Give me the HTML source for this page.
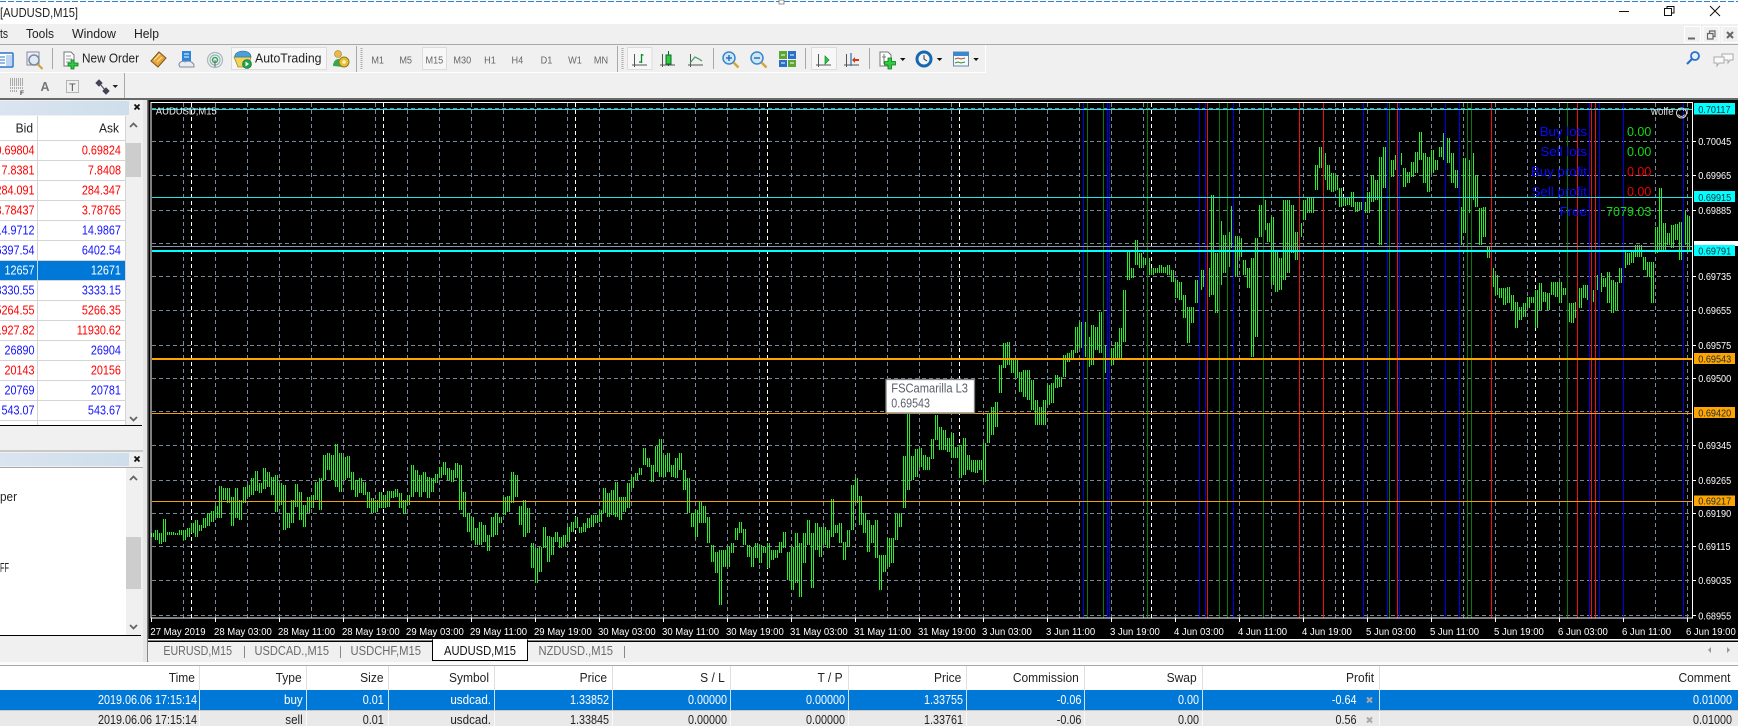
<!DOCTYPE html>
<html><head><meta charset="utf-8"><title>AUDUSD,M15</title>
<style>
html,body{margin:0;padding:0;background:#f0f0f0;width:1738px;height:726px;overflow:hidden}
svg{display:block;font-family:"Liberation Sans",sans-serif}
.c{shape-rendering:crispEdges}
</style></head><body>
<svg width="1738" height="726" viewBox="0 0 1738 726" xmlns="http://www.w3.org/2000/svg">
<defs>
<pattern id="b" width="2" height="1" patternUnits="userSpaceOnUse"><rect x="1" width="1" height="1" fill="#28f028"/></pattern>
<linearGradient id="hd" x1="0" x2="1" y1="0" y2="0"><stop offset="0" stop-color="#d9e5f0"/><stop offset="1" stop-color="#cfdeec"/></linearGradient>
</defs>
<!-- base -->
<rect width="1738" height="726" fill="#f0f0f0"/>
<rect width="1738" height="24" fill="#fff"/>
<path d="M0 1.5H1738" stroke="#2f80d0" stroke-width="1" stroke-dasharray="6 2" class="c"/>
<rect x="779" y="0" width="5" height="4" fill="#fff" stroke="#777" stroke-width=".8"/>
<text x="0" y="17" font-size="13" fill="#222" textLength="78" lengthAdjust="spacingAndGlyphs">[AUDUSD,M15]</text>
<!-- window controls -->
<path d="M1619 11.5H1629" stroke="#111" class="c"/>
<path d="M1664.5 8.5h7v7h-7zM1667 8V6.5h7V13h-2" fill="none" stroke="#111"/>
<path d="M1710 6l10 10M1720 6l-10 10" stroke="#111" stroke-width="1"/>
<!-- menu -->
<g font-size="13" fill="#222">
<text x="0" y="38" textLength="8" lengthAdjust="spacingAndGlyphs">ts</text>
<text x="26" y="38" textLength="28" lengthAdjust="spacingAndGlyphs">Tools</text>
<text x="72" y="38" textLength="44" lengthAdjust="spacingAndGlyphs">Window</text>
<text x="134" y="38" textLength="25" lengthAdjust="spacingAndGlyphs">Help</text>
</g>
<g fill="#f0f0f0" stroke="#fff" class="c"><rect x="1684.5" y="26.5" width="16" height="16"/><rect x="1703" y="26.5" width="16" height="16"/><rect x="1722" y="26.5" width="16" height="16"/></g>
<path d="M1688 38.5h7" stroke="#666" stroke-width="2"/>
<path d="M1707.500 33.500h5.500v5.500h-5.500zM1709.500 33v-2h5.500v5.500h-2" fill="none" stroke="#666" stroke-width="1.200"/>
<path d="M1727 32l6 6M1733 32l-6 6" stroke="#666" stroke-width="2"/>
<rect y="44" width="1738" height="1" fill="#a8a8a8"/>
<rect x="0" y="72" width="986" height="1" fill="#fff"/>
<rect x="985" y="45" width="1" height="27" fill="#fff"/>
<!-- toolbar 1 icons -->
<rect x="-4" y="53" width="17" height="14" rx="1" fill="#fff" stroke="#2a73c8" stroke-width="1.500"/><path d="M0 57h5M0 60h5M0 63h5" stroke="#2a73c8"/><rect x="6" y="55" width="6" height="11" fill="#bcd6f2"/>
<rect x="27" y="52" width="12" height="13" fill="#eef" stroke="#889"/><circle cx="34" cy="60" r="5" fill="#dfeaf4" stroke="#7a8a9a" stroke-width="1.500"/><path d="M37.500 64l5 5" stroke="#c9a13a" stroke-width="2"/>
<rect x="52" y="48" width="1" height="21" fill="#a8a8a8"/>
<path d="M64 52h7l3 3v11H64z" fill="#fff" stroke="#777"/><path d="M66 56h5M66 59h6M66 62h4" stroke="#99a"/>
<path d="M71 60v3h-3v3h3v3h3v-3h4v-3h-4v-3z" fill="#2ecc40" stroke="#0a7a1a" stroke-width=".8"/>
<text x="82" y="62.500" font-size="12.500" fill="#222" textLength="57" lengthAdjust="spacingAndGlyphs">New Order</text>
<path d="M151 61l8-9 7 6-8 9z" fill="#e8a63a" stroke="#7a5418" stroke-width="1"/><path d="M154 60l6-6M157 62l5-5" stroke="#ffe6a0"/>
<rect x="182" y="51" width="9" height="10" fill="#2f86d8"/><path d="M184 54h5M184 57h5" stroke="#dff"/><path d="M180 67c-3-4 2-7 5-5 3-2 10 0 9 5z" fill="#e6eef5" stroke="#889"/>
<g fill="none"><circle cx="215" cy="60" r="7.500" stroke="#a7b7c7" stroke-width="1.200"/><circle cx="215" cy="60" r="5" stroke="#8fbf9f" stroke-width="1.200"/><circle cx="215" cy="60" r="2.500" stroke="#3a9e6a" stroke-width="1.500"/></g><path d="M215 60v7" stroke="#667"/>
<rect x="231.500" y="47.500" width="95" height="22" fill="#f7f7f7" stroke="#dcdcdc" class="c"/>
<path d="M234 57h17l-3 10h-10z" fill="#f2d45c" stroke="#a08a2a" stroke-width=".8"/><path d="M235 57c-1-3 3-6 8-6 4 0 8 2 8 6z" fill="#4a9fd8" stroke="#2a6a98" stroke-width=".6"/><circle cx="247" cy="64" r="4.500" fill="#1fa04a" stroke="#0a6a2a" stroke-width=".6"/><path d="M245.500 61.500v5l3.500-2.500z" fill="#fff"/>
<text x="255" y="62.500" font-size="12.500" fill="#222" textLength="66.500" lengthAdjust="spacingAndGlyphs">AutoTrading</text>
<circle cx="338" cy="54" r="3.500" fill="#e9b949" stroke="#a07a20" stroke-width=".6"/><path d="M333 66c0-8 8-9 10-4v5z" fill="#37a84a"/><circle cx="344" cy="62" r="5" fill="#e5c13a" stroke="#8e7a20"/><circle cx="344" cy="62" r="1.800" fill="#fff3b0"/>
<rect x="356" y="46" width="1" height="26" fill="#a8a8a8"/><path d="M361.500 48V69" stroke="#aaa" stroke-width="2" stroke-dasharray="1 1"/>
<rect x="422.500" y="47.500" width="24" height="22" fill="#f7f7f7" stroke="#dcdcdc" class="c"/>
<g transform="scale(.87 1)" font-size="10.500" fill="#666" text-anchor="middle">
<text x="434.100" y="63.300">M1</text><text x="466.300" y="63.300">M5</text><text x="499.300" y="63.300">M15</text><text x="531.400" y="63.300">M30</text><text x="563.200" y="63.300">H1</text><text x="594.700" y="63.300">H4</text><text x="628.200" y="63.300">D1</text><text x="660.900" y="63.300">W1</text><text x="690.800" y="63.300">MN</text>
</g>
<rect x="617" y="46" width="1" height="26" fill="#a8a8a8"/><path d="M622.500 48V69" stroke="#aaa" stroke-width="2" stroke-dasharray="1 1"/>
<rect x="627.500" y="47.500" width="24.500" height="22" fill="#f7f7f7" stroke="#dcdcdc" class="c"/>
<rect x="811.500" y="47.500" width="25" height="22" fill="#f7f7f7" stroke="#dcdcdc" class="c"/>
<g fill="none" stroke="#555" class="c">
<path d="M634.500 54v13M632 65h15"/><path d="M662.500 54v13M660 65h15"/><path d="M690.500 54v13M688 65h15"/><path d="M818.500 54v13M816 65h15"/><path d="M846.500 54v13M844 65h15"/>
</g>
<path d="M641.500 54v9M639 62h2.500M641.500 55h2" fill="none" stroke="#0a8a2a" stroke-width="1.300"/>
<rect x="666" y="55" width="5" height="9" fill="#2ecc40" stroke="#0a6a2a"/><path d="M668.500 51v4M668.500 64v2" stroke="#0a6a2a"/>
<path d="M690 63l5-6 4 2 3 2" fill="none" stroke="#3aa05a" stroke-width="1.200"/>
<path d="M825 56v8l4-4z" fill="#2ecc40" stroke="#0a8a2a" stroke-width=".7"/>
<path d="M851 53v13" stroke="#2a70a8" stroke-width="1.200"/><path d="M859 59h-4v-2l-3 3 3 3v-2h4z" fill="#d03a1a"/>
<rect x="713" y="48" width="1" height="21" fill="#a8a8a8"/><rect x="805" y="48" width="1" height="21" fill="#a8a8a8"/><rect x="869" y="48" width="1" height="21" fill="#a8a8a8"/>
<g><circle cx="729" cy="58" r="6" fill="#cfe6f8" stroke="#3a88c8" stroke-width="1.500"/><path d="M726 58h6M729 55v6" stroke="#2a70b8" stroke-width="1.500"/><path d="M733.500 62.500l5 5" stroke="#d0a83a" stroke-width="2.500"/></g>
<g><circle cx="757" cy="58" r="6" fill="#cfe6f8" stroke="#3a88c8" stroke-width="1.500"/><path d="M754 58h6" stroke="#2a70b8" stroke-width="1.500"/><path d="M761.500 62.500l5 5" stroke="#d0a83a" stroke-width="2.500"/></g>
<g class="c"><rect x="779" y="51" width="8" height="8" fill="#5aa832"/><rect x="788" y="51" width="8" height="8" fill="#2a70c8"/><rect x="779" y="60" width="8" height="7" fill="#2a70c8"/><rect x="788" y="60" width="8" height="7" fill="#5aa832"/><path d="M781 55h4M790 55h4M781 63h4M790 63h4" stroke="#fff"/></g>
<path d="M880 52h8l3 3v11H880z" fill="#fff" stroke="#777"/><path d="M884 54v10M882 57h4" stroke="#777"/>
<path d="M888 58v3.500h-3.500v3.500h3.500v4h3.500v-4h4v-3.500h-4V58z" fill="#2ecc40" stroke="#0a7a1a" stroke-width=".8"/>
<path d="M900 58h5.500l-2.700 3zM936.800 58h5.500l-2.700 3zM973.300 58h5.500l-2.700 3z" fill="#111"/>
<circle cx="924" cy="59" r="7" fill="#f2f5f8" stroke="#1668b0" stroke-width="3"/><path d="M924 55v4l3 2" fill="none" stroke="#333"/>
<rect x="953.500" y="52" width="15" height="14" fill="#f4f8fb" stroke="#6688a8"/><rect x="953.500" y="52" width="15" height="4" fill="#3a88d0"/><path d="M955 59l3-1 3 1 4-1" fill="none" stroke="#b0502a"/><path d="M955 63l3-1 3 1 4-1" fill="none" stroke="#3a8a3a"/>
<!-- top right -->
<circle cx="1695" cy="56" r="4" fill="#e6f0fa" stroke="#2a70c8" stroke-width="1.800"/><path d="M1692 59l-5 5" stroke="#2a70c8" stroke-width="2.200"/>
<path d="M1722 54h11v6h-3l-2 3v-3h-6z" fill="#fafafa" stroke="#aaa"/><path d="M1714 57h10v6h-5l-2 3v-3h-3z" fill="#fafafa" stroke="#aaa"/>
<!-- toolbar 2 -->
<path d="M10 79h13M10 81h13M10 83h13M10 85h13M10 88h13M10 91h8" stroke="#666" stroke-dasharray="1 1"/>
<text x="20" y="95" font-size="6.500" font-weight="bold" fill="#444">F</text>
<text x="40.500" y="91" font-size="12.500" fill="#777" font-weight="bold">A</text>
<rect x="66.500" y="80.500" width="12" height="12" fill="none" stroke="#777" stroke-dasharray="1 1"/><text x="69" y="91" font-size="11" fill="#555">T</text>
<path d="M96 83l3-3 3 3-3 3zM103 91l3-3 3 3-3 3zM100 84l5 6" fill="#445" stroke="#445"/>
<path d="M112.500 85h5.500l-2.700 3z" fill="#222"/>
<rect x="124" y="73" width="1" height="25" fill="#a8a8a8"/>
<rect y="98" width="1738" height="2" fill="#696969"/>
<!-- left panel -->
<rect x="143" y="100" width="4" height="562" fill="#e6e6e6"/>
<rect x="0" y="100" width="143" height="16" fill="#f0f0f0"/>
<rect x="0" y="101" width="129" height="14" fill="url(#hd)"/>
<path d="M134.500 104.500l5 5M139.500 104.500l-5 5" stroke="#111" stroke-width="1.800"/>
<rect x="0" y="116" width="125.500" height="309" fill="#fff"/>
<rect x="126" y="116" width="17" height="309" fill="#f0f0f0"/>
<rect x="126" y="143" width="15" height="34" fill="#cdcdcd"/>
<path d="M130 127l3.500-3.500 3.500 3.500M130 417l3.500 3.500 3.500-3.500" fill="none" stroke="#666" stroke-width="1.800"/>
<rect x="0" y="260" width="125" height="20" fill="#0078d7"/>
<g class="c" stroke="#d4d4d4"><path d="M0 140.500H125M0 160.500H125M0 180.500H125M0 200.500H125M0 220.500H125M0 240.500H125M0 260.500H125M0 280.500H125M0 300.500H125M0 320.500H125M0 340.500H125M0 360.500H125M0 380.500H125M0 400.500H125M0 420.500H125M37.500 116V425M125.500 116V425"/></g>
<path d="M37.500 261V280" stroke="#bcd6f0" class="c"/>
<g transform="scale(.96 1)" font-size="12.500" fill="#222" text-anchor="end"><text x="34.400" y="132.700">Bid</text><text x="124" y="132.700">Ask</text></g>
<g transform="scale(.864 1)" font-size="12.500" text-anchor="end">
<g fill="#ff0000"><text x="39.900" y="154.500">0.69804</text><text x="140" y="154.500">0.69824</text><text x="39.900" y="174.500">7.8381</text><text x="140" y="174.500">7.8408</text><text x="39.900" y="194.500">284.091</text><text x="140" y="194.500">284.347</text><text x="39.900" y="214.500">3.78437</text><text x="140" y="214.500">3.78765</text></g>
<g fill="#1414ff"><text x="39.900" y="234.500">14.9712</text><text x="140" y="234.500">14.9867</text><text x="39.900" y="254.500">6397.54</text><text x="140" y="254.500">6402.54</text></g>
<g fill="#fff"><text x="39.900" y="274.500">12657</text><text x="140" y="274.500">12671</text></g>
<g fill="#1414ff"><text x="39.900" y="294.500">3330.55</text><text x="140" y="294.500">3333.15</text></g>
<g fill="#ff0000"><text x="39.900" y="314.500">5264.55</text><text x="140" y="314.500">5266.35</text><text x="39.900" y="334.500">11927.82</text><text x="140" y="334.500">11930.62</text></g>
<g fill="#1414ff"><text x="39.900" y="354.500">26890</text><text x="140" y="354.500">26904</text></g>
<g fill="#ff0000"><text x="39.900" y="374.500">20143</text><text x="140" y="374.500">20156</text></g>
<g fill="#1414ff"><text x="39.900" y="394.500">20769</text><text x="140" y="394.500">20781</text><text x="39.900" y="414.500">543.07</text><text x="140" y="414.500">543.67</text></g>
</g>
<rect x="0" y="425" width="142" height="1" fill="#000"/>
<rect x="0" y="450" width="143" height="2" fill="#c8c8c8"/>
<rect x="0" y="453" width="129" height="13" fill="url(#hd)"/>
<path d="M134.500 456.500l5 5M139.500 456.500l-5 5" stroke="#111" stroke-width="1.800"/>
<rect x="0" y="467" width="143" height="1" fill="#a8a8a8"/>
<rect x="0" y="468" width="126" height="167.500" fill="#fff"/>
<rect x="126" y="537" width="15" height="52" fill="#cdcdcd"/>
<path d="M130 480l3.500-3.500 3.500 3.500M130 625l3.500 3.500 3.500-3.500" fill="none" stroke="#666" stroke-width="1.800"/>
<rect x="0" y="635" width="141" height="1" fill="#000"/>
<text x="0" y="501" font-size="12.500" fill="#222" textLength="17" lengthAdjust="spacingAndGlyphs">per</text>
<text x="0" y="572" font-size="12.500" fill="#222" textLength="9" lengthAdjust="spacingAndGlyphs">FF</text>
<!-- chart -->
<rect x="147" y="100" width="1591" height="539" fill="#000"/>
<rect x="147" y="100" width="1.500" height="562" fill="#777"/>
<rect x="148" y="639" width="1590" height="1.500" fill="#fff"/>
<rect x="148" y="640.500" width="1590" height="1.500" fill="#000"/>
<path class="c" fill="none" stroke="#778899" stroke-dasharray="4 3" d="M183.500 103V618M215.500 103V618M247.500 103V618M279.500 103V618M311.500 103V618M343.500 103V618M375.500 103V618M407.500 103V618M439.500 103V618M471.500 103V618M503.500 103V618M535.500 103V618M567.500 103V618M599.500 103V618M631.500 103V618M663.500 103V618M695.500 103V618M727.500 103V618M759.500 103V618M791.500 103V618M823.500 103V618M855.500 103V618M887.500 103V618M919.500 103V618M951.500 103V618M983.500 103V618M1015.500 103V618M1047.500 103V618M1079.500 103V618M1111.500 103V618M1143.500 103V618M1175.500 103V618M1207.500 103V618M1239.500 103V618M1271.500 103V618M1303.500 103V618M1335.500 103V618M1367.500 103V618M1399.500 103V618M1431.500 103V618M1463.500 103V618M1495.500 103V618M1527.500 103V618M1559.500 103V618M1591.500 103V618M1623.500 103V618M1655.500 103V618M1687.500 103V618"/>
<path class="c" fill="none" stroke="#778899" stroke-dasharray="4 3" d="M152 108.500H1692M152 141.500H1692M152 175.500H1692M152 210.500H1692M152 243.500H1692M152 276.500H1692M152 310.500H1692M152 345.500H1692M152 378.500H1692M152 411.500H1692M152 445.500H1692M152 480.500H1692M152 513.500H1692M152 546.500H1692M152 580.500H1692M152 615.500H1692"/>
<path class="c" fill="none" stroke="#fff" stroke-dasharray="4 3" d="M191.500 103V618M383.500 103V618M575.500 103V618M767.500 103V618M959.500 103V618M1151.500 103V618M1343.500 103V618M1535.500 103V618"/>
<path fill="none" stroke="url(#b)" stroke-width="4" class="c" d="M152 533V537M156 530V540M160 533V544M164 519V542M168 532V535M172 532V535M176 533V535M180 530V535M184 530V540M188 528V537M192 523V533M196 520V537M200 525V531M204 518V528M208 513V526M212 511V522M216 506V518M220 486V518M224 488V500M228 488V503M232 497V526M236 488V518M240 500V520M244 487V503M248 485V497M252 478V495M256 471V491M260 483V493M264 468V489M268 472V487M272 477V495M276 475V512M280 483V505M284 485V530M288 513V528M292 500V523M296 484V507M300 492V520M304 505V527M308 497V513M312 495V508M316 482V500M320 478V510M324 455V480M328 453V470M332 455V480M336 444V487M340 453V492M344 457V480M348 456V478M352 472V490M356 480V497M360 478V493M364 482V495M368 492V508M372 498V513M376 500V512M380 492V508M384 495V508M388 491V507M392 491V498M396 489V497M400 493V508M404 500V514M408 495V505M412 465V497M416 470V492M420 475V497M424 472V492M428 477V498M432 478V492M436 474V483M440 467V478M444 462V475M448 468V480M452 470V482M456 463V478M460 465V510M464 492V517M468 513V532M472 517V540M476 528V545M480 522V545M484 525V542M488 535V551M492 517V537M496 513V535M500 517V523M504 497V515M508 496V512M512 472V503M516 475V497M520 506V525M524 500V537M528 508V533M532 543V568M536 548V583M540 547V572M544 527V548M548 536V562M552 537V555M556 532V542M560 537V548M564 535V547M568 527V542M572 522V532M576 517V528M580 527V533M584 523V532M588 518V528M592 515V527M596 515V523M600 510V522M604 488V513M608 493V517M612 490V515M616 482V517M620 497V520M624 497V512M628 483V508M632 477V488M636 473V480M640 468V475M644 448V465M648 458V467M652 465V482M656 446V472M660 439V477M664 455V477M668 453V472M672 465V477M676 458V478M680 453V470M684 470V490M688 478V513M692 513V527M696 510V537M700 501V523M704 506V523M708 517V543M712 545V562M716 552V573M720 550V605M724 550V567M728 547V567M732 543V553M736 528V540M740 522V533M744 529V545M748 545V557M752 547V567M756 543V558M760 545V563M764 547V553M768 543V568M772 550V560M776 550V558M780 542V553M784 532V548M788 552V580M792 547V590M796 533V583M800 543V597M804 533V563M808 520V545M812 533V588M816 523V550M820 527V557M824 527V545M828 530V548M832 499V537M836 525V533M840 523V543M844 542V560M848 530V547M852 485V530M856 478V503M860 496V525M864 513V533M868 520V552M872 525V543M876 520V558M880 555V590M884 555V572M888 538V567M892 538V563M896 514V540M900 513V527M904 456V508M908 413V490M912 456V480M916 449V477M920 448V467M924 455V470M928 457V470M932 439V459M936 415V440M940 427V450M944 430V450M948 438V452M952 433V458M956 447V458M960 445V478M964 438V475M968 455V470M972 460V472M976 460V473M980 460V470M984 443V482M988 413V443M992 407V435M996 402V427M1000 365V393M1004 343V368M1008 342V365M1012 360V373M1016 360V378M1020 372V392M1024 370V397M1028 370V400M1032 380V410M1036 400V425M1040 407V425M1044 400V425M1048 385V405M1052 383V403M1056 375V388M1060 377V387M1064 355V377M1068 353V362M1072 350V360M1076 327V353M1080 322V348M1084 322V357M1088 337V367M1092 325V365M1096 327V350M1100 312V353M1104 345V373M1108 332V377M1112 348V365M1116 342V360M1120 328V360M1124 290V342M1128 252V280M1132 268V278M1136 240V265M1140 253V268M1144 258V265M1148 258V275M1152 268V275M1156 268V273M1160 265V273M1164 267V273M1168 265V275M1172 270V282M1176 280V298M1180 282V300M1184 295V318M1188 307V343M1192 307V323M1196 280V303M1200 270V290M1204 270V287M1208 268V297M1212 195V295M1216 253V313M1220 221V285M1224 235V273M1228 232V267M1232 206V248M1236 236V277M1240 238V257M1244 260V275M1248 268V288M1252 258V357M1256 238V337M1260 205V237M1264 200V230M1268 223V242M1272 217V285M1276 252V292M1280 258V290M1284 200V280M1288 200V273M1292 205V253M1296 232V260M1300 223V237M1304 200V220M1308 198V213M1312 197V213M1316 165V190M1320 147V168M1324 153V180M1328 165V190M1332 173V192M1336 175V190M1340 188V207M1344 197V206M1348 197V205M1352 192V207M1356 202V212M1360 202V210M1364 202V213M1368 192V213M1372 175V202M1376 180V200M1380 157V245M1384 147V188M1388 157V177M1392 160V177M1396 155V170M1400 153V165M1404 168V187M1408 172V183M1412 162V177M1416 152V173M1420 132V160M1424 153V183M1428 157V192M1432 150V173M1436 160V170M1440 147V157M1444 133V160M1448 138V163M1452 153V183M1456 170V188M1460 207V245M1464 158V233M1468 160V213M1472 153V200M1476 175V207M1480 208V245M1484 207V237M1488 247V258M1492 268V287M1496 275V295M1500 288V298M1504 288V305M1508 287V303M1512 295V310M1516 302V328M1520 307V320M1524 303V317M1528 297V308M1532 297V303M1536 290V328M1540 283V310M1544 292V302M1548 293V310M1552 282V295M1556 282V297M1560 282V303M1564 288V295M1568 303V322M1572 303V323M1576 302V318M1580 288V308M1584 285V298M1588 285V300M1592 290V302M1596 275V290M1600 273V292M1604 278V287M1608 272V303M1612 280V313M1616 282V310M1620 268V283M1624 252V268M1628 253V265M1632 252V263M1636 245V257M1640 245V257M1644 257V270M1648 262V277M1652 262V303M1656 227V253M1660 188V250M1664 223V252M1668 233V245M1672 225V248M1676 224V240M1680 222V260M1684 211V245M1688 216V250"/>
<path class="c" fill="none" stroke="#0000e6" d="M1083.500 103V618M1107.500 103V618M1109.500 103V618M1199.500 103V618M1205.500 103V618M1233.500 103V618M1363.500 103V618M1387.500 103V618M1399.500 103V618M1445.500 103V618M1459.500 103V618M1589.500 103V618M1599.500 103V618M1623.500 103V618M1683.500 103V618"/>
<path class="c" fill="none" stroke="#0a780a" d="M1087.500 103V618M1103.500 103V618M1147.500 103V618M1219.500 103V618M1227.500 103V618M1263.500 103V618M1389.500 103V618M1467.500 103V618M1471.500 103V618M1567.500 103V618"/>
<path class="c" fill="none" stroke="#ee1111" d="M1207.500 103V618M1299.500 103V618M1323.500 103V618M1397.500 103V618M1491.500 103V618M1577.500 103V618M1591.500 103V618M1595.500 103V618"/>
<path class="c" fill="none" stroke="#8899aa" d="M152 246.500H1692"/>
<path class="c" fill="none" stroke="#22e6e6" d="M152 109.500H1692M152 197.500H1692"/>
<rect x="152" y="250" width="1541" height="2" fill="#00ffff"/>
<rect x="152" y="358" width="1541" height="2" fill="#ffa500"/>
<path class="c" fill="none" stroke="#f0a010" d="M152 413.500H1692M152 501.500H1692"/>
<rect x="151" y="102.500" width="1541.500" height="515.500" fill="none" stroke="#fff" class="c"/>
<path class="c" stroke="#fff" d="M151.500 618V622M215.500 618V622M279.500 618V622M343.500 618V622M407.500 618V622M471.500 618V622M535.500 618V622M599.500 618V622M663.500 618V622M727.500 618V622M791.500 618V622M855.500 618V622M919.500 618V622M983.500 618V622M1047.500 618V622M1111.500 618V622M1175.500 618V622M1239.500 618V622M1303.500 618V622M1367.500 618V622M1431.500 618V622M1495.500 618V622M1559.500 618V622M1623.500 618V622M1687.500 618V622M1692 141.500h4M1692 175.500h4M1692 210.500h4M1692 276.500h4M1692 310.500h4M1692 345.500h4M1692 378.500h4M1692 445.500h4M1692 480.500h4M1692 513.500h4M1692 546.500h4M1692 580.500h4M1692 615.500h4"/>
<!-- chart text -->
<text x="155.800" y="114.300" font-size="10.500" fill="#e8e8e8" textLength="61" lengthAdjust="spacingAndGlyphs">AUDUSD,M15</text>
<text x="1651" y="115" font-size="11" fill="#ddd" textLength="22.600" lengthAdjust="spacingAndGlyphs">wolfe</text>
<circle cx="1681.500" cy="113" r="5" fill="none" stroke="#ddd"/><path d="M1678.500 114.500c1 2.500 5 2.500 6 0" fill="none" stroke="#ddd"/><path d="M1679.500 110.500h.8M1683 110.500h.8" stroke="#ddd"/>
<g font-size="13.300" fill="#0a0aff" text-anchor="end">
<text x="1587" y="136">Buy lots</text><text x="1587" y="156">Sell lots</text><text x="1587" y="176">Buy profit</text><text x="1587" y="196">Sell profit</text><text x="1587" y="216">Free</text>
</g>
<g font-size="12.500" text-anchor="end">
<text x="1651.300" y="136" fill="#10dc10">0.00</text><text x="1651.300" y="156" fill="#10dc10">0.00</text><text x="1651.300" y="176" fill="#f00000">0.00</text><text x="1651.300" y="196" fill="#f00000">0.00</text><text x="1651.300" y="216" fill="#10dc10">7079.03</text>
</g>
<!-- tooltip -->
<rect x="886" y="379.500" width="88.500" height="33.500" fill="#fff" stroke="#808080" stroke-width="1.300"/>
<text x="891.300" y="392.700" font-size="12.500" fill="#5a5f6a" textLength="76.700" lengthAdjust="spacingAndGlyphs">FSCamarilla L3</text>
<text x="891.300" y="407.500" font-size="12.500" fill="#5a5f6a" textLength="38.600" lengthAdjust="spacingAndGlyphs">0.69543</text>
<!-- price tags -->
<rect x="1694" y="241" width="44" height="5" fill="#fff"/>
<g class="c"><rect x="1694" y="103" width="41" height="11.500" fill="#00ffff"/><rect x="1694" y="191" width="41" height="11" fill="#00ffff"/><rect x="1694" y="245" width="41" height="11" fill="#00ffff"/><rect x="1694" y="353" width="41" height="11" fill="#ffa500"/><rect x="1694" y="407" width="41" height="11" fill="#ffa500"/><rect x="1694" y="495.500" width="41" height="10.500" fill="#ffa500"/></g>
<g transform="scale(.87 1)" font-size="10.500">
<g fill="#fff"><text x="1952" y="145">0.70045</text><text x="1952" y="179">0.69965</text><text x="1952" y="214">0.69885</text><text x="1952" y="280">0.69735</text><text x="1952" y="314">0.69655</text><text x="1952" y="349">0.69575</text><text x="1952" y="382">0.69500</text><text x="1952" y="449">0.69345</text><text x="1952" y="484">0.69265</text><text x="1952" y="517">0.69190</text><text x="1952" y="550">0.69115</text><text x="1952" y="584">0.69035</text><text x="1952" y="619.500">0.68955</text></g>
<g fill="#1c2c3c"><text x="1952" y="113">0.70117</text><text x="1952" y="201">0.69915</text><text x="1952" y="254.500">0.69791</text><text x="1952" y="362.500">0.69543</text><text x="1952" y="416.500">0.69420</text><text x="1952" y="504.500">0.69217</text></g>
</g>
<g transform="scale(.91 1)" font-size="10.500" fill="#fff">
<text x="165.300" y="635">27 May 2019</text><text x="235.200" y="635">28 May 03:00</text><text x="305.500" y="635">28 May 11:00</text><text x="375.800" y="635">28 May 19:00</text><text x="446.200" y="635">29 May 03:00</text><text x="516.500" y="635">29 May 11:00</text><text x="586.800" y="635">29 May 19:00</text><text x="657.100" y="635">30 May 03:00</text><text x="727.500" y="635">30 May 11:00</text><text x="797.800" y="635">30 May 19:00</text><text x="868.100" y="635">31 May 03:00</text><text x="938.500" y="635">31 May 11:00</text><text x="1008.800" y="635">31 May 19:00</text><text x="1079.100" y="635">3 Jun 03:00</text><text x="1149.500" y="635">3 Jun 11:00</text><text x="1219.800" y="635">3 Jun 19:00</text><text x="1290.100" y="635">4 Jun 03:00</text><text x="1360.400" y="635">4 Jun 11:00</text><text x="1430.800" y="635">4 Jun 19:00</text><text x="1501.100" y="635">5 Jun 03:00</text><text x="1571.400" y="635">5 Jun 11:00</text><text x="1641.800" y="635">5 Jun 19:00</text><text x="1712.100" y="635">6 Jun 03:00</text><text x="1782.400" y="635">6 Jun 11:00</text><text x="1852.700" y="635">6 Jun 19:00</text>
</g>
<!-- tabs -->
<rect x="147" y="642" width="1591" height="19.500" fill="#f0f0f0"/>
<rect x="147" y="642" width="1" height="20" fill="#888"/>
<rect x="432.500" y="640" width="95" height="20.500" fill="#fff" stroke="#000" class="c"/>
<rect x="433" y="639" width="94" height="3" fill="#fff"/>
<rect x="244" y="646" width="1" height="12" fill="#888"/><rect x="340" y="646" width="1" height="12" fill="#888"/><rect x="624" y="646" width="1" height="12" fill="#888"/>
<g font-size="12.500" fill="#6a6a6a">
<text x="163.400" y="655" textLength="68.600" lengthAdjust="spacingAndGlyphs">EURUSD,M15</text>
<text x="254.500" y="655" textLength="74.500" lengthAdjust="spacingAndGlyphs">USDCAD.,M15</text>
<text x="350.500" y="655" textLength="70.500" lengthAdjust="spacingAndGlyphs">USDCHF,M15</text>
<text x="444" y="655" fill="#111" textLength="72" lengthAdjust="spacingAndGlyphs">AUDUSD,M15</text>
<text x="538.500" y="655" textLength="74.500" lengthAdjust="spacingAndGlyphs">NZDUSD.,M15</text>
</g>
<path d="M1711 647v6l-3-3zM1727 647v6l3-3z" fill="#999"/>
<!-- table -->
<rect x="0" y="662" width="1738" height="3" fill="#fbfbfb"/>
<rect x="0" y="665" width="1738" height="1" fill="#a8a8a8"/>
<rect x="0" y="666" width="1738" height="24" fill="#fff"/>
<rect x="0" y="690" width="1738" height="20" fill="#0078d7"/>
<rect x="0" y="710" width="1738" height="1" fill="#c8c8c8"/>
<rect x="0" y="711" width="1738" height="15" fill="#e9e9e9"/>
<path class="c" stroke="#e0e0e0" d="M199.500 666V690M306.500 666V690M388.500 666V690M494.500 666V690M612.500 666V690M730.500 666V690M848.500 666V690M966.500 666V690M1084.500 666V690M1202.500 666V690M1379.500 666V690"/>
<path class="c" stroke="#cfe3f6" d="M199.500 690V710M306.500 690V710M388.500 690V710M494.500 690V710M612.500 690V710M730.500 690V710M848.500 690V710M966.500 690V710M1084.500 690V710M1202.500 690V710M1379.500 690V710"/>
<path class="c" stroke="#fafafa" d="M199.500 711V726M306.500 711V726M388.500 711V726M494.500 711V726M612.500 711V726M730.500 711V726M848.500 711V726M966.500 711V726M1084.500 711V726M1202.500 711V726M1379.500 711V726"/>
<g transform="scale(.96 1)" font-size="12.500" fill="#222" text-anchor="end">
<text x="203.100" y="682">Time</text><text x="314.200" y="682">Type</text><text x="399.500" y="682">Size</text><text x="509.400" y="682">Symbol</text><text x="632.300" y="682">Price</text><text x="755" y="682">S / L</text><text x="877.700" y="682">T / P</text><text x="1001.400" y="682">Price</text><text x="1123.800" y="682">Commission</text><text x="1246.500" y="682">Swap</text><text x="1431.300" y="682">Profit</text><text x="1802.600" y="682">Comment</text>
</g>
<g transform="scale(.93 1)" font-size="12.500" text-anchor="end">
<text x="325.500" y="704" fill="#fff">buy</text><text x="528" y="704" fill="#fff">usdcad.</text>
<text x="325.500" y="724" fill="#222">sell</text><text x="528" y="724" fill="#222">usdcad.</text>
</g>
<g transform="scale(.864 1)" font-size="12.500" text-anchor="end">
<g fill="#fff"><text x="228" y="704">2019.06.06 17:15:14</text><text x="444.200" y="704">0.01</text><text x="704.900" y="704">1.33852</text><text x="841.400" y="704">0.00000</text><text x="978" y="704">0.00000</text><text x="1114.600" y="704">1.33755</text><text x="1251.600" y="704">-0.06</text><text x="1387.700" y="704">0.00</text><text x="1570" y="704">-0.64</text><text x="2004.600" y="704">0.01000</text></g>
<g fill="#222"><text x="228" y="724">2019.06.06 17:15:14</text><text x="444.200" y="724">0.01</text><text x="704.900" y="724">1.33845</text><text x="841.400" y="724">0.00000</text><text x="978" y="724">0.00000</text><text x="1114.600" y="724">1.33761</text><text x="1251.600" y="724">-0.06</text><text x="1387.700" y="724">0.00</text><text x="1570" y="724">0.56</text><text x="2004.600" y="724">0.01000</text></g>
</g>
<path d="M1367 697.500l5 5M1372 697.500l-5 5M1367 717.500l5 5M1372 717.500l-5 5" stroke="#a8a8a8" stroke-width="2"/>
</svg>
</body></html>
